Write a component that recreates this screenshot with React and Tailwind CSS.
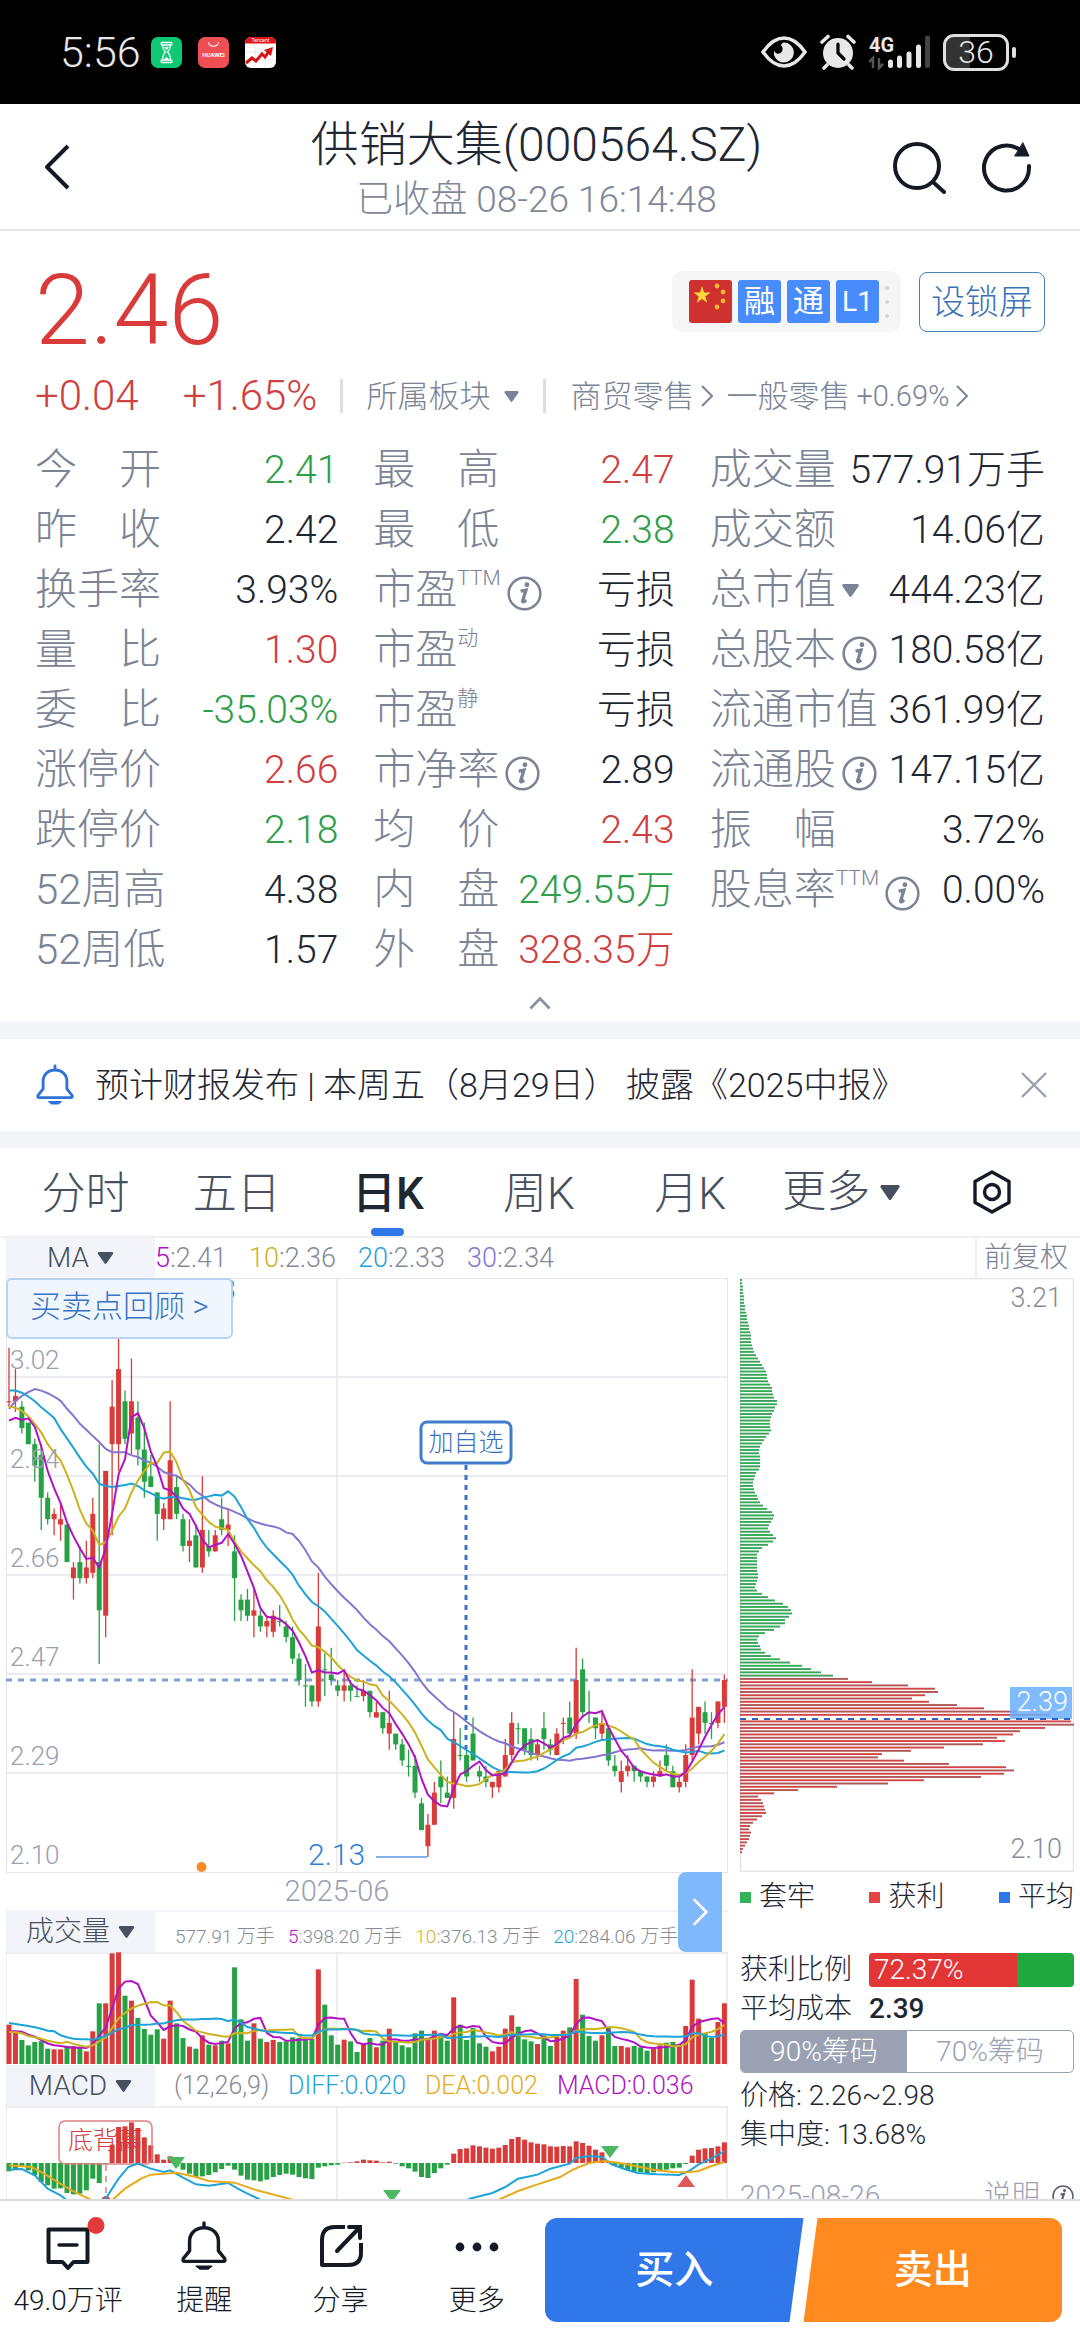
import { useState } from 'react';
import clsx from 'clsx';

const UP = '#d93a3a';
const DOWN = '#26a144';

// direction, body top, body bottom, high, low (prices in cents)
const candles = `
r298,298,308,297 r299,298,304,296 g297,293,298,292 g294,290,294,290 g290,286,291,283 g288,280,290,274 g280,276,281,275
r277,276,278,273 r276,275,279,272 g275,268,275,268 r267,265,268,261 g268,265,271,264 r267,265,272,264 r277,266,280,265
g268,259,290,249 r285,258,285,254 r297,290,302,273 r304,290,314,285 g298,291,300,290 r298,292,306,288 g295,289,298,286
g289,283,294,280 g284,282,288,282 g281,277,281,272 r278,276,279,274 r287,276,298,276 g282,277,284,276 g276,271,277,270
r272,271,276,268 g273,267,275,267 r274,267,284,266 g271,270,274,269 r273,270,274,270 g276,274,280,273 r275,274,278,271
g270,265,273,257 g261,259,262,257 g261,258,263,257 r259,258,263,254 g258,256,259,255 r257,256,258,254 r258,255,259,254
g257,257,260,256 g256,254,257,253 g254,250,256,249 g250,246,251,245 g245,245,249,241 g245,242,245,241 r256,242,266,241
g248,248,251,243 g247,246,252,245 g245,244,246,243 r245,244,248,242 g245,244,246,242 g243,243,245,243 r244,243,246,242
g244,240,244,239 r240,239,242,239 g240,237,240,236 r238,236,244,233 g236,234,236,233 g234,231,235,230 g230,230,233,228
g230,225,232,224 g223,218,224,218 r219,215,221,213 r225,219,227,219 g228,226,231,223 g225,224,228,224 r235,224,240,222
g232,232,237,231 g232,228,233,227 g236,231,239,231 g229,228,230,227 g228,227,230,226 r227,226,227,224 r229,226,229,225
r232,228,235,228 r238,232,240,231 g237,237,238,234 g237,233,237,232 g235,232,237,231 r234,232,235,231 g237,235,240,233
g234,233,235,232 r236,232,237,232 r238,238,239,234 g239,236,242,236 r246,236,252,235 g248,240,250,239 g240,240,244,238
g239,237,239,235 r238,236,240,235 g237,231,237,230 g230,229,232,228 r229,227,231,225 r230,229,232,228 g230,229,230,227
g229,228,229,227 g228,227,228,226 r228,227,229,226 r229,228,231,228 g232,230,234,229 g229,226,230,226 r227,226,228,225
r232,227,234,226 r239,232,248,231 r241,236,241,234 g240,238,242,236 g238,238,240,235 r242,238,242,237 r246,241,247,238
`.trim().split(/\s+/).map((s) => {
  const [top, bottom, high, low] = s.slice(1).split(',').map(Number);
  const up = s[0] === 'r';
  return { up, top, bottom, high, low, close: up ? top : bottom };
});

const volumes = [
  118, 98, 72, 56, 66, 68, 46, 44, 44, 54, 54, 50, 38, 98, 182, 182, 332, 335, 205, 190, 138, 105, 88, 104, 76, 190, 122, 78,
  52, 46, 86, 58, 56, 70, 62, 290, 134, 70, 122, 76, 66, 72, 66, 68, 80, 78, 74, 76, 284, 178, 86, 58, 73, 68, 36, 60,
  78, 50, 70, 106, 66, 56, 50, 92, 100, 76, 100, 86, 70, 200, 118, 72, 108, 62, 52, 38, 52, 106, 146, 112, 74, 68, 60, 86,
  54, 82, 100, 110, 255, 148, 84, 70, 86, 112, 54, 54, 50, 54, 50, 40, 46, 56, 64, 66, 58, 114, 253, 136, 92, 78, 126, 182,
];

const macd = [
  -25, -20, -12, -22, -37, -57, -67, -77, -76, -90, -94, -92, -82, -47, -60, -4, 55, 108, 110, 122, 105, 77, 53, 26, 10, 20, -10, -20,
  -32, -42, -40, -36, -28, -18, -8, -20, -38, -50, -52, -55, -50, -42, -36, -32, -35, -42, -46, -48, -14, -10, -7, -5, 1, 2, 5, 10,
  8, 7, 2, 4, -2, -10, -16, -26, -42, -45, -30, -16, -5, 28, 42, 44, 53, 50, 46, 43, 46, 54, 72, 78, 70, 62, 58, 56,
  50, 49, 51, 50, 65, 60, 52, 40, 32, 4, -8, -14, -22, -26, -27, -30, -28, -25, -20, -16, -14, -3, 22, 40, 44, 45, 50, 62,
];

const diff = [
  [0, -20], [2, -18], [4, -37], [6, -77], [8, -97], [9, -112], [12, -172], [15, -107], [17, -47], [18.5, -12], [20, -2], [22, -17],
  [24, -27], [25, -22], [27, -44], [29, -64], [31, -68], [34, -60], [35.5, -77], [37, -92], [39, -110], [49, -190], [64, -182],
  [71.5, -107], [75, -90], [77, -72], [79, -47], [82, -35], [84, -17], [87, -2], [88, 15], [90, 21], [92, 18], [93.5, -4],
  [95.5, -18], [97.5, -30], [100.5, -34], [104, -36], [105.5, -24], [107, -4], [109, 13], [111, 36],
];

const dea = [
  [0, -7], [3.5, -12], [5, -27], [9.5, -80], [12, -104], [13, -112], [16, -112], [18, -77], [20.5, -47], [22, -35], [26, -29],
  [29, -42], [31, -54], [35, -59], [38.5, -82], [44, -110], [56, -177], [71, -157], [76, -110], [79, -84], [82, -64], [85.5, -42],
  [87.5, -20], [90, 0], [92.5, 6], [95.5, -2], [100, -20], [103, -27], [105.5, -28], [107, -24], [109, -9], [111, 3],
];

const trapped = [
  6, 6, 9, 9, 9, 12, 12, 12, 15, 15, 18, 21, 21, 24, 27, 27, 30, 33, 33, 33, 36, 39, 42, 48, 54, 60, 66, 72, 78, 81,
  81, 84, 90, 96, 96, 99, 102, 111, 111, 105, 102, 96, 93, 90, 90, 90, 93, 87, 78, 72, 66, 60, 57, 57, 60, 60, 60, 60, 57, 48,
  45, 42, 39, 39, 42, 45, 51, 54, 60, 69, 81, 96, 102, 99, 93, 87, 84, 90, 99, 108, 99, 84, 66, 57, 51, 51, 51, 51, 51, 51,
  54, 54, 51, 48, 45, 51, 66, 84, 105, 129, 144, 153, 156, 147, 135, 135, 120, 102, 75, 57, 51, 54, 60, 63, 75, 93, 120, 150,
  186, 213, 243, 279,
];

const profit = [
  324, 396, 504, 585, 594, 555, 516, 567, 651, 732, 830, 930, 0, 993, 1002, 915, 840, 819, 771, 795, 729, 612, 513, 426, 414,
  492, 627, 798, 822, 792, 723, 552, 444, 291, 174, 102, 54, 63, 69, 72, 75, 78, 66, 51, 39, 30, 27, 33, 30, 27, 21, 15, 9, 6,
];

const MA_COLORS = { 5: '#b012c4', 10: '#cdb21f', 20: '#1ea3d8', 30: '#8676cf' };

// averages for the days whose window starts before the visible range
const priceLead = {
  5: [294.4, 294.9, 294.5, 294.8],
  10: [297, 296.8, 296.2, 295.2, 293.8, 292.2, 290, 288.4, 287],
  20: [300, 300, 299.6, 298.9, 298, 296.9, 295.9, 294.9, 292.8, 291.1, 289.3, 287.5, 285.8, 284.5, 282.6, 282.2, 282, 282.2, 282.4],
  30: [296.6, 298, 299, 299.7, 300.3, 300, 299.5, 298.9, 298.1, 296.6, 295.3, 293.8, 292.7, 291.5, 290.4, 289.1, 288.5, 288.5,
    288.5, 287.9, 287.6, 287, 286.5, 285.8, 284.8, 284.4, 284.1, 283.3, 282.5],
};
const volumeLead = {
  5: [98, 98, 97, 88],
  10: [96, 95, 92, 84, 80, 76, 70, 66, 62],
  20: [123, 120, 117, 114, 110, 106, 100, 98, 86, 80, 76, 74, 74, 73, 78, 84, 94, 104, 108],
};

const movingAverage = (values, n, lead) =>
  values.map((_, i) => (i < lead.length ? lead[i] : values.slice(i - n + 1, i + 1).reduce((a, b) => a + b, 0) / n));

const cx = (i) => 3 + i * 6.445;
const py = (p) => ((321 - p) * 595) / 111;
const toPoints = (values, y) => values.map((v, i) => `${cx(i).toFixed(1)},${y(v).toFixed(1)}`).join(' ');

const quotes = [
  [
    { label: '今　开', value: '2.41', tone: 'down' },
    { label: '昨　收', value: '2.42' },
    { label: '换手率', value: '3.93%' },
    { label: '量　比', value: '1.30', tone: 'up' },
    { label: '委　比', value: '-35.03%', tone: 'down' },
    { label: '涨停价', value: '2.66', tone: 'up' },
    { label: '跌停价', value: '2.18', tone: 'down' },
    { label: '52周高', value: '4.38' },
    { label: '52周低', value: '1.57' },
  ],
  [
    { label: '最　高', value: '2.47', tone: 'up' },
    { label: '最　低', value: '2.38', tone: 'down' },
    { label: '市盈', sup: 'TTM', info: true, value: '亏损' },
    { label: '市盈', sup: '动', value: '亏损' },
    { label: '市盈', sup: '静', value: '亏损' },
    { label: '市净率', info: true, value: '2.89' },
    { label: '均　价', value: '2.43', tone: 'up' },
    { label: '内　盘', value: '249.55万', tone: 'down' },
    { label: '外　盘', value: '328.35万', tone: 'up' },
  ],
  [
    { label: '成交量', value: '577.91万手' },
    { label: '成交额', value: '14.06亿' },
    { label: '总市值', menu: true, value: '444.23亿' },
    { label: '总股本', info: true, value: '180.58亿' },
    { label: '流通市值', value: '361.99亿' },
    { label: '流通股', info: true, value: '147.15亿' },
    { label: '振　幅', value: '3.72%' },
    { label: '股息率', sup: 'TTM', info: true, value: '0.00%' },
  ],
];

function Triangle({ className }) {
  return (
    <svg viewBox="0 0 18 14" className={className} fill="currentColor" aria-hidden="true">
      <path d="M1.5 0h15a1.5 1.5 0 0 1 1.2 2.4l-7.5 10.8a1.5 1.5 0 0 1-2.4 0L.3 2.4A1.5 1.5 0 0 1 1.5 0z" />
    </svg>
  );
}

function Chevron({ className }) {
  return (
    <svg viewBox="0 0 14 24" className={className} fill="none" stroke="currentColor" strokeWidth="2" aria-hidden="true">
      <path d="M2 2l10 10L2 22" />
    </svg>
  );
}

function InfoIcon({ className }) {
  return (
    <svg viewBox="0 0 36 36" className={className} fill="none" stroke="currentColor" aria-hidden="true">
      <circle cx="18" cy="18" r="16.3" strokeWidth="2.6" />
      <path d="M14 15.5l5.5-1-3.4 11q-.2 2.4 3.6-.8" strokeWidth="3.4" />
      <circle cx="20.5" cy="9" r="2.5" fill="currentColor" stroke="none" />
    </svg>
  );
}

function StatusBar() {
  return (
    <div className="flex h-[104px] shrink-0 items-center justify-between bg-black pl-[60px] pr-[64px] text-[#e8e8e8]">
      <div className="flex items-center">
        <span className="w-[78px] text-[43px] font-light leading-none">5:56</span>
        <svg viewBox="0 0 31 31" className="ml-[13px] h-[31px] w-[31px]">
          <rect width="31" height="31" rx="7" fill="#0fc873" />
          <g fill="none" stroke="#fff" strokeWidth="1.3">
            <rect x="10" y="5.5" width="11" height="2.5" rx="1.2" />
            <rect x="10" y="23" width="11" height="2.5" rx="1.2" />
            <path d="M11.5 8c0 4 1 5 3 7-2 2-3 4-3 8M19.5 8c0 4-1 5-3 7 2 2 3 4 3 8" />
          </g>
          <path d="M15.5 13l-2.3-2.6q1-1.4 2.3-.2 1.3-1.2 2.3.2zM12.5 22.5l3-2.5 3 2.5z" fill="#fff" />
        </svg>
        <svg viewBox="0 0 31 31" className="ml-[16px] h-[31px] w-[31px]">
          <rect width="31" height="31" rx="7" fill="#ee4f55" />
          <path d="M10.5 5.5c1 5 9 5 10 0" fill="none" stroke="#fff" strokeWidth="1.2" />
          <text x="15.5" y="20" fontSize="6" fontWeight="700" fill="#fff" textAnchor="middle">HUAWEI</text>
        </svg>
        <svg viewBox="0 0 31 31" className="ml-[16px] h-[31px] w-[31px]">
          <rect width="31" height="31" rx="6" fill="#fff" />
          <path d="M0 6.5V6a6 6 0 0 1 6-6h19a6 6 0 0 1 6 6v.5z" fill="#e01212" />
          <path d="M10 7v24M20 7v24M0 15h31M0 23h31" stroke="#e8e8e8" />
          <path d="M1 26l6-5 4 3 6-7 3 3 5-7" fill="none" stroke="#d41414" strokeWidth="3" />
          <path d="M19 13l9-3-2 9z" fill="#d41414" />
          <text x="15.5" y="5.2" fontSize="5" fill="#fff" textAnchor="middle">Tencent</text>
        </svg>
      </div>
      <div className="flex items-center">
        <svg viewBox="0 0 46 32" className="h-[32px] w-[46px]">
          <path d="M2 16C9 6 16 2 23 2s14 4 21 14C37 26 30 30 23 30S9 26 2 16z" fill="none" stroke="currentColor" strokeWidth="3.5" />
          <path d="M23 6.5a10 10 0 1 1-10 8c1 3 4 4 6.500 2.500 3-2 2.500-6 .5-7.500 0-1 1.500-3 3-3z" fill="currentColor" />
        </svg>
        <svg viewBox="0 0 36 36" className="ml-[13px] h-[36px] w-[36px]" stroke="currentColor" strokeLinecap="round">
          <circle cx="18" cy="19" r="15" fill="currentColor" stroke="none" />
          <path d="M2 8l6-5.5M34 8l-6-5.5M7 31l-3 3M29 31l3 3" strokeWidth="3.6" />
          <path d="M18 10v9l6 6" fill="none" stroke="#000" strokeWidth="3.2" />
        </svg>
        <svg viewBox="0 0 62 38" className="ml-[13px] h-[38px] w-[62px]">
          <text x="0" y="19" fontSize="20" fontWeight="700" fill="currentColor">4G</text>
          <path d="M4 35V25l-4 4M10 25v10l4-4" fill="none" stroke="#555" strokeWidth="2.5" />
          <g strokeWidth="5" strokeLinecap="round" stroke="currentColor">
            <path d="M21.5 29v3.5M30.5 25v7.5M40 21v11.5M49.5 14v18.5" />
            <path d="M58.5 5v27.5" stroke="#444" />
          </g>
        </svg>
        <div className="ml-[12px] flex h-[37px] w-[66px] items-center justify-center rounded-[11px] border-[3px] border-[#e0e0e0] bg-[linear-gradient(90deg,#333_40%,#000_40%)]">
          <span className="text-[32px] font-light leading-none">36</span>
        </div>
        <div className="ml-[3px] h-[11px] w-[4px] rounded-sm bg-[#e0e0e0]" />
      </div>
    </div>
  );
}

function Header() {
  return (
    <header className="flex h-[127px] shrink-0 items-center justify-between border-b-2 border-[#e3e5e9] pl-[41px] pr-[48px] text-[#141a24]">
      <button type="button" aria-label="返回" className="w-[142px]">
        <svg viewBox="0 0 30 48" className="h-[48px] w-[30px]" fill="none" stroke="currentColor" strokeWidth="4" strokeLinejoin="round">
          <path d="M27 3L6 24l21 21" />
        </svg>
      </button>
      <div className="whitespace-nowrap pt-[6px] text-center">
        <h1 className="text-[48px] font-light leading-[60px] text-[#1f2733]">供销大集(000564.SZ)</h1>
        <p className="text-[37px] font-light leading-[50px] text-[#7f8898]">已收盘 08-26 16:14:48</p>
      </div>
      <div className="flex w-[142px] items-center justify-end gap-[34px]">
        <button type="button" aria-label="搜索">
          <svg viewBox="0 0 56 54" className="h-[54px] w-[56px]" fill="none" stroke="currentColor" strokeWidth="4">
            <circle cx="25" cy="26" r="22" />
            <path d="M41 42l11 10" strokeLinecap="round" />
          </svg>
        </button>
        <button type="button" aria-label="刷新">
          <svg viewBox="0 0 50 54" className="h-[54px] w-[50px]" fill="none" stroke="currentColor" strokeWidth="4" strokeLinecap="round">
            <path d="M47 26v2a22.5 22.5 0 1 1-9-18" />
            <path d="M33 16h14L41 3z" fill="currentColor" strokeWidth="1" />
          </svg>
        </button>
      </div>
    </header>
  );
}

function Summary() {
  return (
    <div className="px-[35px] pt-[35px]">
      <div className="flex items-start justify-between">
        <div className="h-[100px] text-[99px] font-light leading-[88px] text-[#d93a3a]">2.46</div>
        <div className="mt-[5px] flex items-center gap-[18px]">
          <div className="flex h-[61px] items-center gap-[6px] rounded-[10px] bg-[#f6f6f6] pl-[17px] pr-[12px] text-[31px] leading-none text-white">
            <svg viewBox="0 0 43 43" className="h-[43px] w-[43px]">
              <rect width="43" height="43" rx="3" fill="#cf3030" />
              <path d="M13 6l2 6.5h6.5l-5.2 4 2 6.3L13 19l-5.3 3.8 2-6.300-5.200-4H11z" fill="#ffd83a" />
              <g fill="#f4b72e">
                <circle cx="28" cy="6" r="2.4" />
                <circle cx="34" cy="12" r="2.4" />
                <circle cx="34" cy="21" r="2.4" />
                <circle cx="28" cy="27" r="2.4" />
              </g>
            </svg>
            <span className="flex h-[43px] w-[43px] items-center justify-center rounded-[3px] bg-[#478bfd]">融</span>
            <span className="flex h-[43px] w-[43px] items-center justify-center rounded-[3px] bg-[#478bfd]">通</span>
            <span className="flex h-[43px] w-[43px] items-center justify-center rounded-[3px] bg-[#478bfd] text-[28px]">L1</span>
            <span className="flex flex-col gap-[10px]">
              <i className="h-[4px] w-[4px] rounded-full bg-[#d4d4d4]" />
              <i className="h-[4px] w-[4px] rounded-full bg-[#d4d4d4]" />
              <i className="h-[4px] w-[4px] rounded-full bg-[#d4d4d4]" />
            </span>
          </div>
          <button type="button" className="h-[60px] rounded-[8px] border border-[#4a80bd] px-[11px] text-[34px] font-light leading-none text-[#3a72b4]">
            设锁屏
          </button>
        </div>
      </div>
      <div className="flex h-[60px] items-center whitespace-nowrap text-[31px] font-light leading-none text-[#7b8495]">
        <span className="text-[42px] text-[#cf4040]">+0.04</span>
        <span className="ml-[44px] text-[42px] text-[#cf4040]">+1.65%</span>
        <span className="ml-[23px] h-[34px] w-[3px] bg-[#dcdee3]" />
        <button type="button" className="ml-[23px] flex items-center gap-[14px]">
          所属板块
          <Triangle className="h-[11px] w-[15px]" />
        </button>
        <span className="ml-[24px] h-[34px] w-[3px] bg-[#dcdee3]" />
        <a href="#retail" className="ml-[24px] flex items-center gap-[6px]">
          商贸零售
          <Chevron className="h-[24px] w-[14px]" />
        </a>
        <a href="#general" className="ml-[12px] flex items-center gap-[6px]">
          一般零售 <span className="text-[29px]">+0.69%</span>
          <Chevron className="h-[24px] w-[14px]" />
        </a>
      </div>
    </div>
  );
}

function QuoteTable() {
  return (
    <div>
      <div className="mt-[14px] grid grid-cols-[303fr_301fr_335fr] gap-[35px] px-[35px]">
        {quotes.map((column, i) => (
          <dl key={i}>
            {column.map((q) => (
              <div key={q.label + (q.sup || '')} className="flex h-[60px] items-center justify-between whitespace-nowrap font-light leading-none">
                <dt className="flex items-center text-[42px] text-[#7b8495]">
                  {q.label}
                  {q.sup && <sup className="-top-[12px] text-[21px]">{q.sup}</sup>}
                  {q.info && <InfoIcon className="ml-[6px] mt-[6px] h-[35px] w-[35px]" />}
                  {q.menu && <Triangle className="ml-[6px] h-[13px] w-[17px]" />}
                </dt>
                <dd
                  className={clsx('text-[39px]', {
                    'text-[#cf4040]': q.tone === 'up',
                    'text-[#2f9e49]': q.tone === 'down',
                    'text-[#1f2733]': !q.tone,
                  })}
                >
                  {q.value}
                </dd>
              </div>
            ))}
          </dl>
        ))}
      </div>
      <button type="button" aria-label="收起" className="flex h-[42px] w-full items-center justify-center pt-1 text-[#8a92a2]">
        <svg viewBox="0 0 22 14" className="h-[14px] w-[22px]" fill="none" stroke="currentColor" strokeWidth="2.8">
          <path d="M1.5 12.5L11 2.5l9.5 10" />
        </svg>
      </button>
    </div>
  );
}

function BellIcon({ className }) {
  return (
    <svg viewBox="0 0 48 52" className={className} fill="none" stroke="currentColor" strokeWidth="3.6" strokeLinecap="round" strokeLinejoin="round">
      <path d="M24 2v5M24 7C14 7 9 14 9 21v10l-6.5 8q-1 3 1.5 3h40q2.5 0 1.500-3L39 31V21C39 14 34 7 24 7z" />
      <path d="M16 47h16l-4 3h-8z" fill="currentColor" strokeWidth="1.5" />
    </svg>
  );
}

function Notice() {
  return (
    <div className="flex h-[126px] items-center border-y-[17px] border-[#f4f5f9] bg-white pl-[36px] pr-[33px]">
      <BellIcon className="h-[42px] w-[38px] text-[#2f72d8]" />
      <p className="ml-[21px] flex-1 whitespace-nowrap text-[34px] font-light leading-none text-[#1f2733]">
        预计财报发布 | 本周五（8月29日） 披露《2025中报》
      </p>
      <button type="button" aria-label="关闭" className="text-[#9aa1b2]">
        <svg viewBox="0 0 26 26" className="h-[26px] w-[26px]" stroke="currentColor" strokeWidth="2.4">
          <path d="M1 1l24 24M25 1L1 25" />
        </svg>
      </button>
    </div>
  );
}

const periods = ['分时', '五日', '日K', '周K', '月K'];

function PeriodTabs() {
  const [period, setPeriod] = useState('日K');
  return (
    <div className="grid h-[90px] grid-cols-7 border-b-2 border-[#eff0f3] pl-[10px] pr-[12px] text-[44px] font-light leading-none text-[#47505f]">
      {periods.map((name) => (
        <button
          key={name}
          type="button"
          onClick={() => setPeriod(name)}
          className={clsx('flex flex-col items-center justify-between pt-[24px]', name === period && 'font-medium text-[#1f2733]')}
        >
          {name}
          <span className={clsx('h-[8px] w-[33px] rounded-full', name === period && 'bg-[#2f76e8]')} />
        </button>
      ))}
      <button type="button" className="flex items-center justify-center gap-[10px] whitespace-nowrap">
        更多
        <Triangle className="h-[15px] w-[20px]" />
      </button>
      <button type="button" aria-label="设置" className="flex items-center justify-center text-[#141a24]">
        <svg viewBox="0 0 40 44" className="h-[44px] w-[40px]" fill="none" stroke="currentColor" strokeWidth="3.4" strokeLinejoin="round">
          <path d="M20 2l17 9.5v21L20 42 3 32.5v-21z" />
          <circle cx="20" cy="22" r="7.5" />
        </svg>
      </button>
    </div>
  );
}

function IndicatorButton({ children }) {
  return (
    <button type="button" className="flex h-full w-[149px] shrink-0 items-center justify-center gap-[8px] bg-[#f3f4f9] text-[28px] font-light text-[#47505f]">
      {children}
      <Triangle className="h-[12px] w-[17px]" />
    </button>
  );
}

function MaRow() {
  return (
    <div className="ml-[6px] flex h-[40px] items-center whitespace-nowrap text-[27px] font-light leading-none text-[#858b95]">
      <IndicatorButton>MA</IndicatorButton>
      <div className="flex flex-1 gap-[22px]">
        <span><b className="font-light text-[#b012c4]">5</b>:2.41</span>
        <span><b className="font-light text-[#cdb21f]">10</b>:2.36</span>
        <span><b className="font-light text-[#1ea3d8]">20</b>:2.33</span>
        <span><b className="font-light text-[#8676cf]">30</b>:2.34</span>
      </div>
      <button type="button" className="h-full border-l-2 border-[#eff0f3] pl-[7px] pr-[12px] text-[28px] text-[#7b8495]">前复权</button>
    </div>
  );
}

function CandleChart() {
  const closes = candles.map((c) => c.close);
  return (
    <svg viewBox="0 0 722 595" className="block w-full">
      <g stroke="#e5e6ea" strokeWidth="2" fill="none">
        <rect x="0" y="0" width="722" height="595" />
        <path d="M0 99h722M0 198h722M0 297h722M0 396h722M0 495h722M331 0v595" strokeWidth="1.3" />
      </g>
      <path d="M0 402h722" stroke="#7f9fd6" strokeWidth="3" strokeDasharray="6 6" />
      <text x="230" y="22" fontSize="30" fill="#2a7fd6" textAnchor="end">3.13</text>
      {candles.map((c, i) => (
        <g key={i} fill={c.up ? UP : DOWN} stroke={c.up ? UP : DOWN}>
          <path d={`M${cx(i)} ${py(c.high)}V${py(c.low)}`} strokeWidth="1.3" />
          <rect x={cx(i) - 2.5} y={py(c.top)} width="5" height={Math.max(py(c.bottom) - py(c.top), 1)} stroke="none" />
        </g>
      ))}
      {[30, 20, 10, 5].map((n) => (
        <polyline key={n} points={toPoints(movingAverage(closes, n, priceLead[n]), py)} fill="none" stroke={MA_COLORS[n]} strokeWidth="2" />
      ))}
      <g fontSize="26" fill="#9aa0b0" fontWeight="300">
        <text x="4" y="91">3.02</text>
        <text x="4" y="190">2.84</text>
        <text x="4" y="289">2.66</text>
        <text x="4" y="388">2.47</text>
        <text x="4" y="487">2.29</text>
        <text x="4" y="586">2.10</text>
      </g>
      <text x="302" y="587" fontSize="30" fontWeight="300" fill="#2a7fd6">2.13</text>
      <path d="M370 579h51" stroke="#5a9be0" strokeWidth="1.5" />
      <circle cx="195.5" cy="589" r="5" fill="#f58a26" />
      <path d="M460 187v284" stroke="#3a72c4" strokeWidth="3" strokeDasharray="5 5" />
      <rect x="415" y="144" width="90" height="41" rx="6" fill="#fff" stroke="#3f7ccc" strokeWidth="3" />
      <text x="460" y="173" fontSize="25" fontWeight="300" fill="#3a6fbb" textAnchor="middle">加自选</text>
    </svg>
  );
}

function VolumeChart() {
  const y = (v) => 112 - v / 3;
  return (
    <svg viewBox="0 0 722 113" className="block w-full">
      <path d="M0 1h722M331 0v113M0 0v113M721 0v113" stroke="#e8e9ec" strokeWidth="1.5" />
      {volumes.map((v, i) => (
        <rect key={i} x={cx(i) - 2.5} y={y(v)} width="5" height={v / 3} fill={candles[i].up ? UP : DOWN} />
      ))}
      {[5, 10, 20].map((n) => (
        <polyline key={n} points={toPoints(movingAverage(volumes, n, volumeLead[n]), y)} fill="none" stroke={MA_COLORS[n]} strokeWidth="2" />
      ))}
    </svg>
  );
}

function MacdChart() {
  const y = (v) => 57 - v / 3;
  const line = (pts) => pts.map(([i, v]) => `${cx(i)},${y(v)}`).join(' ');
  return (
    <svg viewBox="0 0 722 130" className="block w-full">
      <path d="M0 1h722M331 0v130M0 0v130M721 0v130" stroke="#e8e9ec" strokeWidth="1.5" />
      <text x="62" y="43" fontSize="25" fontWeight="300" fill="#cf4040">底背离</text>
      {macd.map((v, i) => (
        <rect key={i} x={cx(i) - 2.5} y={Math.min(y(v), 57)} width="5" height={Math.abs(v) / 3} fill={v > 0 ? UP : DOWN} />
      ))}
      <rect x="53" y="15" width="93" height="43" rx="6" fill="none" stroke="#d98080" strokeWidth="1.5" />
      <path d="M100 59v34" stroke="#d98080" strokeWidth="1.5" strokeDasharray="6 5" />
      <circle cx="100" cy="95" r="5" fill="#d05050" />
      <polyline points={line(diff)} fill="none" stroke="#1ea3d8" strokeWidth="2" />
      <polyline points={line(dea)} fill="none" stroke="#e5ab1c" strokeWidth="2" />
      <path d="M161 51h18l-9 12zM595 40h18l-9 12zM377 84h18l-9 12z" fill="#4db863" />
      <path d="M671 81h18l-9-12z" fill="#dd5a5a" />
    </svg>
  );
}

function ChipChart() {
  const rowY = (k) => 1 + k * 3.27;
  return (
    <svg viewBox="0 0 334 594" className="block w-full">
      <rect x="0.5" y="0.5" width="333" height="593" fill="none" stroke="#e3e4e8" strokeWidth="1.5" />
      {trapped.map((v, k) => (
        <rect key={k} x="0" y={rowY(k)} width={v / 3} height="1.9" fill={k % 2 ? '#3f9e5c' : '#2fae54'} />
      ))}
      {profit.map((v, k) => (
        <rect key={k} x="0" y={rowY(k + trapped.length)} width={v / 3} height="1.9" fill={k % 2 ? '#d24545' : '#b05555'} />
      ))}
      <rect x="270" y="409" width="62" height="32" fill="#6aaeff" fillOpacity="0.85" />
      <path d="M0 441h332" stroke="#2c62c0" strokeWidth="2" strokeDasharray="6 6" />
      <g fontSize="27" fontWeight="300" fill="#878d98">
        <text x="322" y="29" textAnchor="end">3.21</text>
        <text x="322" y="580" textAnchor="end">2.10</text>
        <text x="328" y="433" textAnchor="end" fill="#fff">2.39</text>
      </g>
    </svg>
  );
}

function ChipPanel() {
  const [range, setRange] = useState('90');
  return (
    <aside className="flex-[334] font-light leading-none text-[#1f2733]">
      <ChipChart />
      <ul className="flex h-[50px] items-center justify-between text-[28px]">
        <li className="flex items-center gap-[8px]"><i className="h-[11px] w-[11px] bg-[#30b356]" />套牢</li>
        <li className="flex items-center gap-[8px]"><i className="h-[11px] w-[11px] bg-[#e34545]" />获利</li>
        <li className="flex items-center gap-[8px]"><i className="h-[11px] w-[11px] bg-[#2f76e8]" />平均</li>
      </ul>
      <div className="mt-[31px] grid grid-cols-[129fr_205fr] items-center text-[28px]">
        <span className="whitespace-nowrap">获利比例</span>
        <div className="flex h-[34px] items-center overflow-hidden rounded-[4px] bg-[#1fa83e]">
          <div className="flex h-full w-[72%] items-center bg-[#e23636] pl-[5px] text-white">72.37%</div>
        </div>
        <span className="flex h-[43px] items-center whitespace-nowrap">平均成本</span>
        <span className="font-medium">2.39</span>
      </div>
      <div className="flex h-[43px] overflow-hidden rounded-[5px] border border-[#99a1b3] text-[28px]">
        {['90', '70'].map((r) => (
          <button
            key={r}
            type="button"
            onClick={() => setRange(r)}
            className={clsx('flex-1 whitespace-nowrap', r === range ? 'bg-[#99a1b3] text-white' : 'text-[#99a1b3]')}
          >
            {r}%筹码
          </button>
        ))}
      </div>
      <p className="mt-[3px] text-[28px] leading-[39px]">价格: 2.26~2.98</p>
      <p className="text-[28px] leading-[39px]">集中度: 13.68%</p>
      <div className="mt-[22px] flex h-[39px] items-center justify-between text-[28px] text-[#9aa1b2]">
        <span>2025-08-26</span>
        <a href="#help" className="flex items-center gap-[12px]">
          说明
          <InfoIcon className="h-[22px] w-[22px] text-[#5a616e]" />
        </a>
      </div>
    </aside>
  );
}

function Charts() {
  return (
    <div className="flex items-start gap-3 px-[6px]">
      <div className="relative flex-[722]">
        <CandleChart />
        <button type="button" className="absolute left-0 top-0 h-[61px] rounded-[6px] border-2 border-[#b9d3ef] bg-[#eff6fe] px-[22px] pb-[4px] text-[31px] font-light leading-none text-[#3a72c4]">
          买卖点回顾 &gt;
        </button>
        <div className="flex h-[39px] items-center justify-center border-b-2 border-[#f2f3f6] pr-[60px] text-[29px] font-light leading-none text-[#9aa0b0]">
          2025-06
        </div>
        <div className="flex h-[40px] items-center whitespace-nowrap font-light leading-none text-[#858b95]">
          <IndicatorButton>成交量</IndicatorButton>
          <div className="flex gap-[13px] pl-[20px] pt-[8px] text-[19px]">
            <span>577.91 万手</span>
            <span><b className="font-light text-[#b012c4]">5</b>:398.20 万手</span>
            <span><b className="font-light text-[#cdb21f]">10</b>:376.13 万手</span>
            <span><b className="font-light text-[#1ea3d8]">20</b>:284.06 万手</span>
          </div>
        </div>
        <button type="button" aria-label="收起筹码" className="absolute right-[6px] top-[594px] flex h-[80px] w-[44px] items-center justify-center rounded-l-[8px] bg-[#7fb8fd] text-white">
          <Chevron className="h-[32px] w-[18px]" />
        </button>
        <VolumeChart />
        <div className="flex h-[41px] items-center gap-[19px] whitespace-nowrap text-[25px] font-light leading-none">
          <IndicatorButton>MACD</IndicatorButton>
          <span className="text-[#858b95]">(12,26,9)</span>
          <span className="text-[#1ea3d8]">DIFF:0.020</span>
          <span className="text-[#e5ab1c]">DEA:0.002</span>
          <span className="text-[#b012c4]">MACD:0.036</span>
        </div>
        <MacdChart />
      </div>
      <ChipPanel />
    </div>
  );
}

function BottomBar() {
  return (
    <footer className="flex h-[141px] shrink-0 items-start border-t-2 border-[#d9dbdf] bg-white pr-[18px] text-[28px] font-light leading-none text-[#141a24]">
      <div className="grid flex-[545] grid-cols-4">
        <button type="button" className="flex flex-col items-center gap-[16px] whitespace-nowrap pt-[16px]">
          <svg viewBox="0 0 60 54" className="ml-[16px] h-[54px] w-[60px]" fill="none" stroke="currentColor" strokeWidth="4" strokeLinejoin="round">
            <path d="M2.5 12.5h39V45h-14L22 51l-5.5-6h-14z" />
            <path d="M13 28h18" strokeLinecap="round" strokeWidth="3.5" />
            <circle cx="50" cy="8.5" r="8.5" fill="#e23a3a" stroke="none" />
          </svg>
          49.0万评
        </button>
        <button type="button" className="flex flex-col items-center gap-[16px] whitespace-nowrap pt-[20px]">
          <BellIcon className="h-[50px] w-[48px]" />
          提醒
        </button>
        <button type="button" className="flex flex-col items-center gap-[16px] whitespace-nowrap pt-[20px]">
          <svg viewBox="0 0 44 50" className="h-[50px] w-[44px]" fill="none" stroke="currentColor" strokeWidth="4">
            <path d="M26 6H16Q3 6 3 19v25h26q13 0 13-12V22" strokeLinejoin="round" />
            <path d="M30 6h11v11M41 6L18 30" strokeLinecap="round" />
          </svg>
          分享
        </button>
        <button type="button" className="flex flex-col items-center gap-[16px] whitespace-nowrap pt-[20px]">
          <svg viewBox="0 0 44 50" className="h-[50px] w-[44px]" fill="currentColor">
            <circle cx="5" cy="26" r="4.4" />
            <circle cx="22" cy="26" r="4.4" />
            <circle cx="39" cy="26" r="4.4" />
          </svg>
          更多
        </button>
      </div>
      <div className="mt-[17px] flex flex-[517] text-[39px] font-medium text-white">
        <button type="button" className="h-[104px] flex-1 rounded-l-[12px] bg-[#3077e9] [clip-path:polygon(0_0,100%_0,calc(100%_-_14px)_100%,0_100%)]">
          买入
        </button>
        <button type="button" className="h-[104px] flex-1 rounded-r-[12px] bg-[#ff8a20] [clip-path:polygon(14px_0,100%_0,100%_100%,0_100%)]">
          卖出
        </button>
      </div>
    </footer>
  );
}

export default function App() {
  return (
    <div className="flex h-screen flex-col bg-white font-['Roboto','Noto_Sans_CJK_SC',sans-serif]">
      <StatusBar />
      <Header />
      <main className="flex-1 overflow-hidden">
        <Summary />
        <QuoteTable />
        <Notice />
        <PeriodTabs />
        <MaRow />
        <Charts />
      </main>
      <BottomBar />
    </div>
  );
}
